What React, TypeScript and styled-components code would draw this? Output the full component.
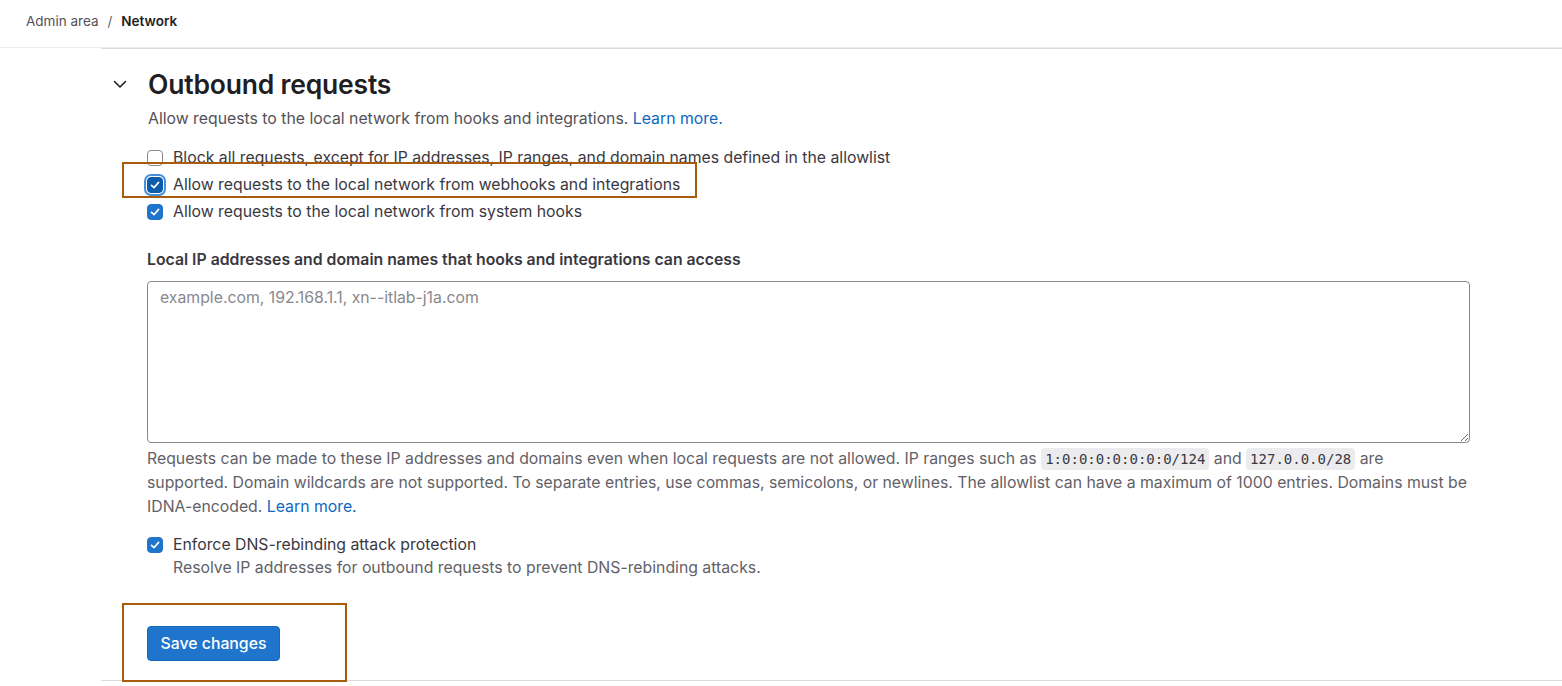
import React from "react";
import styled, { createGlobalStyle } from "styled-components";

const GlobalStyle = createGlobalStyle`
  html, body { margin: 0; padding: 0; background: #ffffff; }
  body { font-family: Inter, "Noto Sans", "Liberation Sans", sans-serif; color: #3a383f; }
  * { box-sizing: border-box; }
`;

const Page = styled.div`
  position: relative;
  width: 1562px;
  height: 686px;
  overflow: hidden;
`;

const Watermark = styled.div`
  position: absolute;
  inset: 0;
  pointer-events: none;
  display: flex;
  flex-direction: column;
  gap: 70px;
  padding-top: 74px;
  z-index: 5;
`;

const WatermarkRow = styled.div<{ $shift: number }>`
  white-space: nowrap;
  font-family: "Liberation Sans", Arial, sans-serif;
  font-size: 21px;
  line-height: 22px;
  color: rgba(0, 0, 0, 0.022);
  margin-left: ${(p) => p.$shift}px;
`;

const Header = styled.header`
  height: 48px;
  display: flex;
  align-items: center;
  padding: 0 0 6px 26px;
  border-bottom: 1px solid #ececef;
  font-size: 13.5px;
`;

const Crumb = styled.span<{ $current?: boolean }>`
  color: ${(p) => (p.$current ? "#1f1e24" : "#535158")};
  font-weight: ${(p) => (p.$current ? 600 : 400)};
`;

const Sep = styled.span`
  color: #626168;
  margin: 0 9px;
`;

const Main = styled.main`
  margin-left: 101px;
  border-top: 1px solid #dcdcde;
  border-bottom: 1px solid #dcdcde;
  padding: 17px 0 19px;
`;

const SectionHead = styled.div`
  display: flex;
  align-items: center;
  height: 36px;
`;

const Chevron = styled.span`
  width: 47px;
  padding-left: 11px;
  display: flex;
  align-items: center;
  color: #1f1e24;
`;

const Title = styled.h2`
  margin: 0;
  font-size: 26.5px;
  font-weight: 600;
  color: #1f1e24;
  letter-spacing: -0.2px;
`;

const Body = styled.div`
  padding-left: 46px;
  padding-right: 94px;
  font-size: 15.8px;
`;

const Description = styled.p`
  margin: 5px 0 0 1px;
  line-height: 24px;
  color: #535158;
`;

const Link = styled.a`
  color: #1068bf;
  text-decoration: none;
`;

const CheckList = styled.div`
  margin-top: 17px;
  display: flex;
  flex-direction: column;
  gap: 7px;
`;

const CheckRow = styled.label`
  position: relative;
  display: flex;
  align-items: center;
  gap: 10px;
  height: 20px;
  line-height: 20px;
  color: #3a383f;
`;

const Box = styled.span<{ $checked?: boolean; $focus?: boolean }>`
  flex: none;
  width: 16px;
  height: 16px;
  border-radius: 4px;
  display: flex;
  align-items: center;
  justify-content: center;
  background: ${(p) => (p.$checked ? (p.$focus ? "#0b5cad" : "#1f75cb") : "#ffffff")};
  border: 1px solid ${(p) => (p.$checked ? (p.$focus ? "#0b5cad" : "#1f75cb") : "#89888d")};
  box-shadow: ${(p) => (p.$focus ? "0 0 0 1px #ffffff, 0 0 0 3px #428fdc" : "none")};
`;

const Highlight = styled.span<{ $left: number; $top: number; $w: number; $h: number }>`
  position: absolute;
  left: ${(p) => p.$left}px;
  top: ${(p) => p.$top}px;
  width: ${(p) => p.$w}px;
  height: ${(p) => p.$h}px;
  border: 2px solid #a85a0d;
  pointer-events: none;
`;

const FieldLabel = styled.div`
  margin-top: 28px;
  font-weight: 600;
  color: #3a383f;
  line-height: 20px;
`;

const TextArea = styled.textarea`
  display: block;
  margin-top: 11px;
  width: 1323px;
  height: 162px;
  padding: 6px 12px;
  border: 1px solid #89888d;
  border-radius: 4px;
  font-family: Inter, "Noto Sans", sans-serif;
  font-size: 15.8px;
  line-height: 20px;
  color: #3a383f;
  resize: vertical;
  outline: none;
  &::placeholder { color: #89888d; }
`;

const Help = styled.p`
  margin: 4px 0 0;
  line-height: 24px;
  color: #626168;
`;

const Code = styled.code`
  font-family: "DejaVu Sans Mono", "Liberation Mono", monospace;
  font-size: 14px;
  color: #3a383f;
  background: #ececef;
  border-radius: 4px;
  padding: 3px 4px;
`;

const DnsBlock = styled.div`
  margin-top: 16px;
`;

const SubText = styled.div`
  margin-left: 26px;
  margin-top: 3px;
  line-height: 20px;
  color: #626168;
`;

const ButtonWrap = styled.div`
  position: relative;
  margin-top: 48px;
  width: 133px;
`;

const Button = styled.button`
  display: block;
  height: 35px;
  padding: 0;
  width: 133px;
  white-space: nowrap;
  background: #1f75cb;
  border: 1px solid #1068bf;
  border-radius: 4px;
  color: #ffffff;
  font-family: Inter, "Noto Sans", sans-serif;
  font-size: 15.8px;
  font-weight: 500;
`;

const Check = () => (
  <svg width="10" height="10" viewBox="0 0 10 10" fill="none">
    <path d="M1.5 5.3 L4 7.6 L8.6 2.4" stroke="#ffffff" strokeWidth="1.6" strokeLinecap="round" strokeLinejoin="round" />
  </svg>
);

const ChevronDown = () => (
  <svg width="16" height="16" viewBox="0 0 16 16" fill="none">
    <path d="M2.5 5.5 L8 11 L13.5 5.5" stroke="#1f1e24" strokeWidth="1.6" strokeLinecap="round" strokeLinejoin="round" />
  </svg>
);

const wm = Array.from({ length: 16 }, () => "yangwenwb_").join("");
const shifts = [-20, -60, -100, -40, -80, -20, -60];

export default function App() {
  return (
    <>
      <GlobalStyle />
      <Page>
        <Header>
          <Crumb>Admin area</Crumb>
          <Sep>/</Sep>
          <Crumb $current>Network</Crumb>
        </Header>
        <Main>
          <SectionHead>
            <Chevron>
              <ChevronDown />
            </Chevron>
            <Title>Outbound requests</Title>
          </SectionHead>
          <Body>
            <Description>
              Allow requests to the local network from hooks and integrations. <Link href="#">Learn more.</Link>
            </Description>
            <CheckList>
              <CheckRow>
                <Box />
                Block all requests, except for IP addresses, IP ranges, and domain names defined in the allowlist
              </CheckRow>
              <CheckRow>
                <Box $checked $focus>
                  <Check />
                </Box>
                Allow requests to the local network from webhooks and integrations
                <Highlight $left={-25} $top={-13} $w={575} $h={36} />
              </CheckRow>
              <CheckRow>
                <Box $checked>
                  <Check />
                </Box>
                Allow requests to the local network from system hooks
              </CheckRow>
            </CheckList>
            <FieldLabel>Local IP addresses and domain names that hooks and integrations can access</FieldLabel>
            <TextArea placeholder="example.com, 192.168.1.1, xn--itlab-j1a.com" />
            <Help>
              Requests can be made to these IP addresses and domains even when local requests are not allowed. IP ranges such as{" "}
              <Code>1:0:0:0:0:0:0:0/124</Code> and <Code>127.0.0.0/28</Code> are supported. Domain wildcards are not supported. To
              separate entries, use commas, semicolons, or newlines. The allowlist can have a maximum of 1000 entries. Domains must be
              IDNA-encoded. <Link href="#">Learn more.</Link>
            </Help>
            <DnsBlock>
              <CheckRow>
                <Box $checked>
                  <Check />
                </Box>
                Enforce DNS-rebinding attack protection
              </CheckRow>
              <SubText>Resolve IP addresses for outbound requests to prevent DNS-rebinding attacks.</SubText>
            </DnsBlock>
            <ButtonWrap>
              <Button>Save changes</Button>
              <Highlight $left={-25} $top={-23} $w={225} $h={79} />
            </ButtonWrap>
          </Body>
        </Main>
        <Watermark>
          {shifts.map((s, i) => (
            <WatermarkRow key={i} $shift={s}>
              {wm}
            </WatermarkRow>
          ))}
        </Watermark>
      </Page>
    </>
  );
}
